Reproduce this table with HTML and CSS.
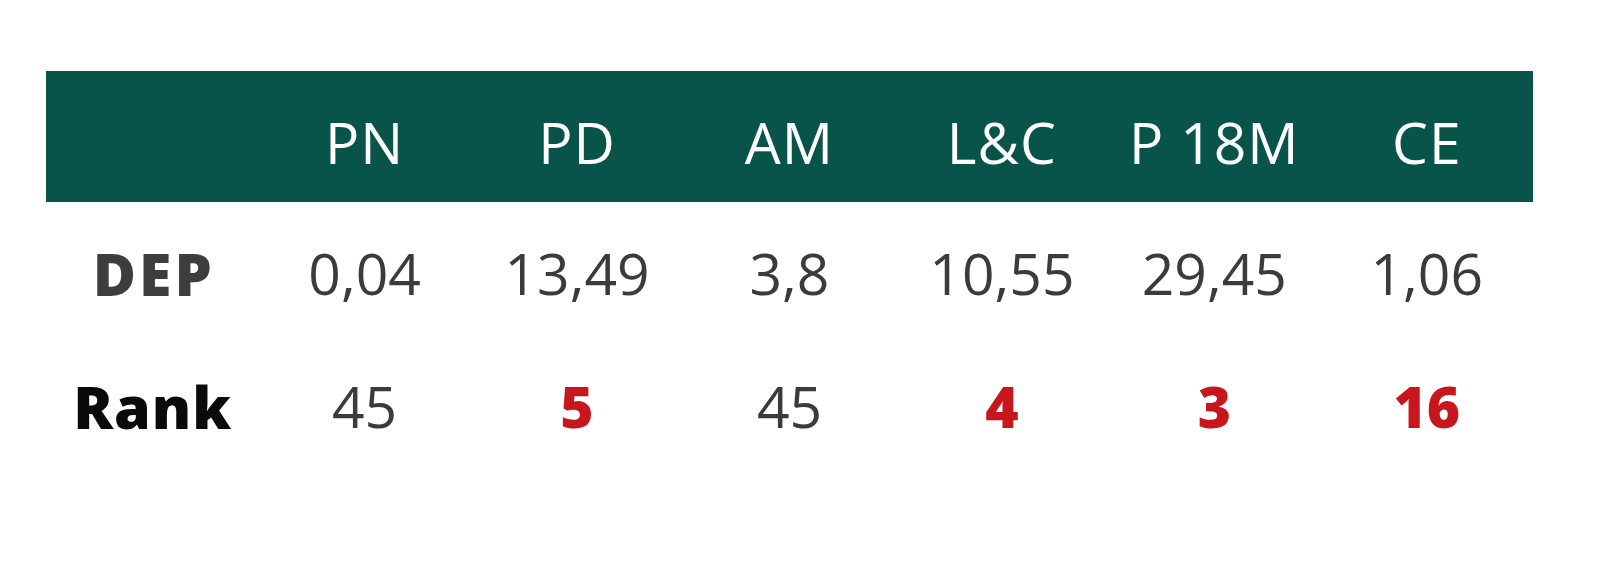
FILE: index.html
```html
<!DOCTYPE html>
<html lang="it">
<head>
<meta charset="utf-8">
<title>DEP Rank</title>
<link rel="stylesheet" href="styles.css">
</head>
<body>
<div class="page">
  <div class="table">
    <div class="row head">
      <div class="cell"></div>
      <div class="cell">PN</div>
      <div class="cell">PD</div>
      <div class="cell">AM</div>
      <div class="cell">L&amp;C</div>
      <div class="cell">P 18M</div>
      <div class="cell">CE</div>
    </div>
    <div class="body">
      <div class="row">
        <div class="cell label dep">DEP</div>
        <div class="cell">0,04</div>
        <div class="cell">13,49</div>
        <div class="cell">3,8</div>
        <div class="cell">10,55</div>
        <div class="cell">29,45</div>
        <div class="cell">1,06</div>
      </div>
      <div class="row">
        <div class="cell label rank">Rank</div>
        <div class="cell">45</div>
        <div class="cell hi">5</div>
        <div class="cell">45</div>
        <div class="cell hi">4</div>
        <div class="cell hi">3</div>
        <div class="cell hi">16</div>
      </div>
    </div>
  </div>
</div>
</body>
</html>
```
FILE: styles.css
```css
html, body {
  margin: 0;
  padding: 0;
  background: #ffffff;
}
.page {
  width: 1600px;
  height: 573px;
  padding: 71px 0 0 46px;
  box-sizing: border-box;
  font-family: "Open Sans", "Noto Sans", sans-serif;
}
.table {
  width: 1487px;
}
.row {
  display: grid;
  grid-template-columns: repeat(7, 1fr);
  text-align: center;
  font-size: 57px;
  color: #3b3b3b;
  line-height: 133px;
}
.head {
  background: #09544a;
  color: #ffffff;
  height: 131px;
  padding-top: 12px;
  line-height: 119px;
  box-sizing: border-box;
  letter-spacing: 1px;
}
.body {
  padding-top: 5px;
}
.label {
  font-weight: 800;
  font-size: 59px;
}
.dep {
  color: #3d3d3d;
  letter-spacing: 3px;
  text-indent: 3px;
}
.rank {
  color: #0a0a0a;
  letter-spacing: 1px;
  text-indent: 1px;
}
.hi {
  color: #c8161d;
  font-weight: 800;
}
```
